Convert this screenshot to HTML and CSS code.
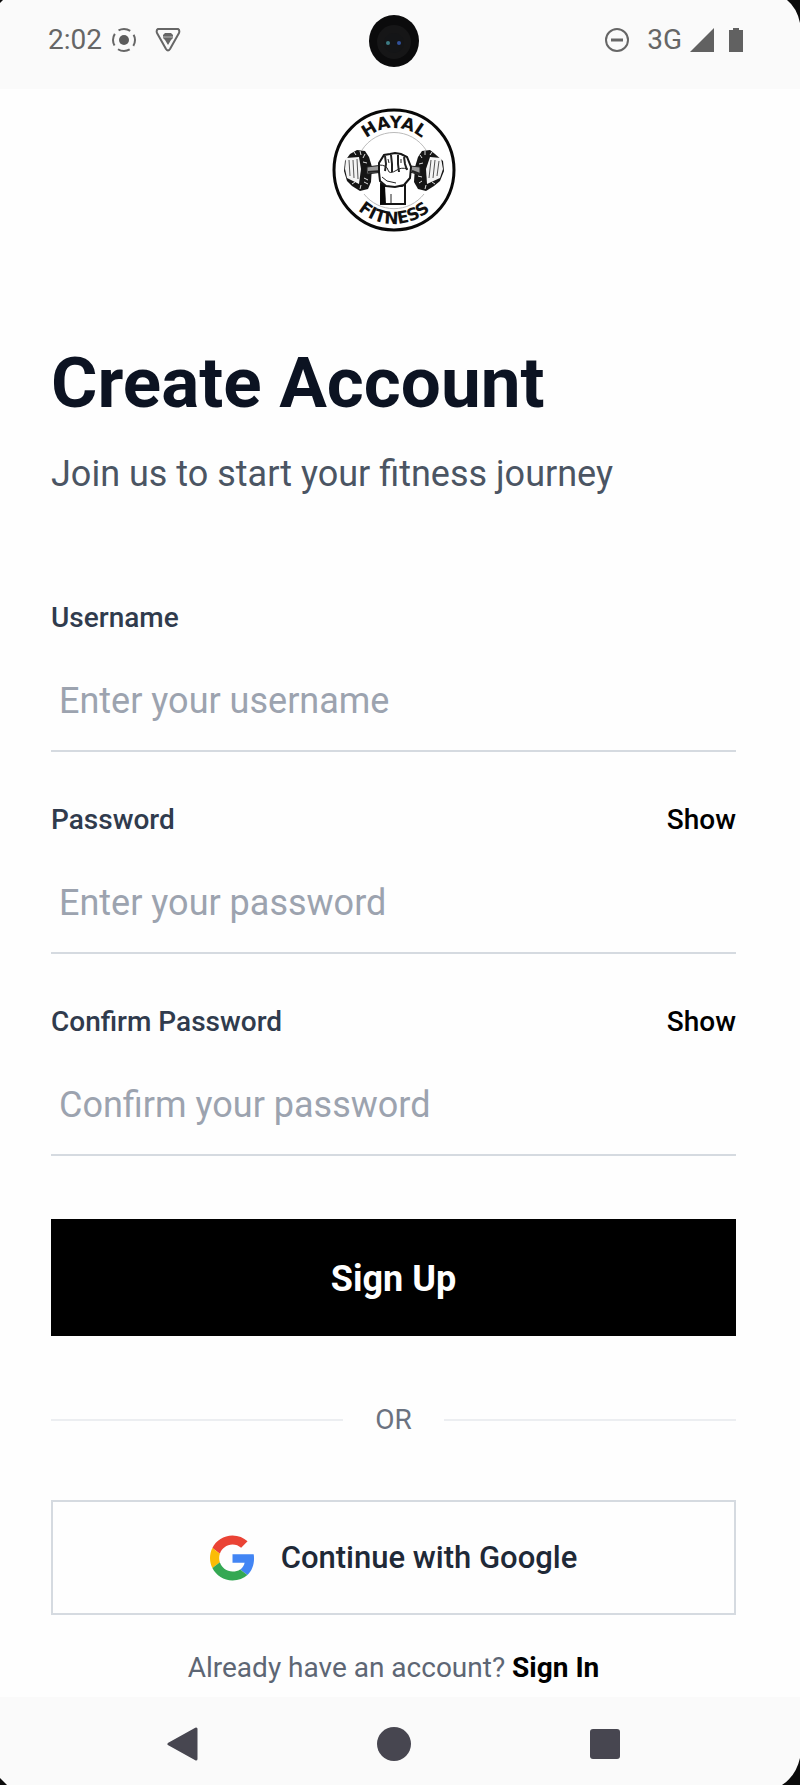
FILE: index.html
```
<!DOCTYPE html>
<html lang="en">
<head>
  <meta charset="UTF-8" />
  <meta name="viewport" content="width=device-width, initial-scale=1.0" />
  <title>Hayal Fitness - Create Account</title>
  <link rel="stylesheet" href="styles.css">
</head>
<body>

  <div class="screen">
    <header class="status-bar">
      <div class="status-left">
        <span>2:02</span>
        <svg class="cast" width="26" height="26" viewBox="0 0 26 26" fill="none" stroke="#666" stroke-width="2">
          <circle cx="13" cy="13" r="5" fill="#5c5c5c" stroke="none" />
          <circle cx="13" cy="13" r="11" stroke-dasharray="12.3 5" stroke-dashoffset="6.1" />
        </svg>
        <svg width="26" height="26" viewBox="0 0 26 26" fill="none" stroke="#666" stroke-width="2" stroke-linejoin="round">
          <path d="M3 2h20q2 1 1 4L15 22q-2 3-4 0L2 6q-1-3 1-4z" />
          <path d="M10 6h6l2 2v3l-2 2-3 5-3-5-2-2V8z" fill="#666" stroke="none" />
          <path d="M8 10h10" stroke="#bbb" stroke-width="1" />
        </svg>
      </div>
      <div class="status-right">
        <svg class="dnd" width="26" height="26" viewBox="0 0 26 26" fill="none" stroke="#666" stroke-width="2">
          <circle cx="13" cy="13" r="11" />
          <path d="M7 13h12" stroke-width="3" />
        </svg>
        <span>3G</span>
        <svg class="signal" width="24" height="24" viewBox="0 0 24 24" fill="#616161"><path d="M0 24L24 0v24z" /></svg>
        <svg width="16" height="26" viewBox="0 0 16 26" fill="#616161"><path d="M5 1h6v2h4v22H1V3h4z" /></svg>
      </div>
      <svg class="camera" width="52" height="54" viewBox="0 0 52 54">
        <ellipse cx="26" cy="27" rx="25" ry="26" fill="#0b0b0c" />
        <circle cx="26" cy="28" r="17" fill="#161617" />
        <circle cx="26" cy="29" r="10" fill="#141517" />
        <circle cx="20" cy="29" r="2" fill="#3d7c85" />
        <circle cx="31" cy="29" r="2" fill="#31519a" />
      </svg>
    </header>

    <main class="content">
      <svg class="logo" width="124" height="124" viewBox="0 0 124 124" role="img" aria-label="Hayal Fitness">
        <defs>
          <path id="topArc" d="M20 62a42 42 0 0 1 84 0" />
          <path id="bottomArc" d="M8 62a54 54 0 0 0 108 0" />
        </defs>
        <circle cx="62" cy="62" r="60" fill="#fff" stroke="#080808" stroke-width="3" />
        <path d="M30 42a38 38 0 0 1 64 0M32 86a38 38 0 0 0 60 0" fill="none" stroke="#bbb" />
        <text class="logo-text"><textPath href="#topArc" startOffset="50%">HAYAL</textPath></text>
        <text class="logo-text"><textPath href="#bottomArc" startOffset="50%">FITNESS</textPath></text>
        <!-- left weight -->
        <path d="M18 46l7-4 8 1 4 6 3 10-1 15-3 7-8 2-8-5-5-5-3-10 1-10z" fill="#151515" />
        <path d="M14 50l13-1 2 12-2 15-12-6-2-9z" fill="#f4f4f4" />
        <path d="M17 52l1 16M21 52l1 18M25 51l1 20" stroke="#555" fill="none" />
        <path d="M22 44l2 3M28 43l1 4M33 46l-2 4M20 76l3-2M28 81l1-4M36 76l-4-2M31 54l4 1M32 70l4 2" stroke="#ddd" fill="none" />
        <!-- right weight -->
        <path d="M103 46l-5-4-8 1-4 6-3 10-1 15 4 7 8 2 8-5 6-5 4-10-1-10z" fill="#151515" />
        <path d="M109 50l-11-1-4 12 1 15 13-6 3-9z" fill="#f4f4f4" />
        <path d="M99 52l-2 18M103 52l-2 18M107 53l-2 15" stroke="#555" fill="none" />
        <path d="M100 44l-2 3M93 43v4M88 47l2 3M87 75l3-2M93 81l1-4M103 76l-3-2M87 56l4-1M86 68l4 1" stroke="#ddd" fill="none" />
        <!-- bar -->
        <path d="M35 59l16-2v7l-16 2zM78 58l10 1v8l-10-3z" fill="#999" stroke="#222" />
        <path d="M36 64l14-1M80 63l8 3" stroke="#222" stroke-width="2" />
        <!-- fist and wrist -->
        <path d="M49 76l4 2h17l3-2v20H49z" fill="#fff" stroke="#151515" stroke-width="2" />
        <path d="M49 76l4 2 1 18h-6z" fill="#080808" />
        <path d="M47 64v-9l5-8 6-1 5-1 6 1 6 3 4 10-1 11-6 7-9 2-9-1-6-5z" fill="#fff" stroke="#151515" stroke-width="2" />
        <path d="M53 48l1 8-1 7M59 47l1 9v8M66 47v9l1 8M72 49l1 7 2 6" fill="none" stroke="#222" stroke-width="2" />
        <path d="M47 57q8 0 9 5t9 0q4-3 11-1M56 51l1 4M69 51v4M50 69l5 4 9 2M59 86v9" fill="none" stroke="#222" />
      </svg>

      <h1>Create Account</h1>
      <p class="subtitle">Join us to start your fitness journey</p>

      <form class="signup-form">
        <div class="field">
          <div class="field-header">
            <label for="username">Username</label>
          </div>
          <input type="text" id="username" placeholder="Enter your username" />
        </div>

        <div class="field">
          <div class="field-header">
            <label for="password">Password</label>
            <button type="button" class="show-btn">Show</button>
          </div>
          <input type="password" id="password" placeholder="Enter your password" />
        </div>

        <div class="field">
          <div class="field-header">
            <label for="confirmPassword">Confirm Password</label>
            <button type="button" class="show-btn">Show</button>
          </div>
          <input type="password" id="confirmPassword" placeholder="Confirm your password" />
        </div>

        <button type="submit" class="signup-btn">Sign Up</button>
      </form>

      <div class="divider"><span>OR</span></div>

      <button type="button" class="google-btn">
        <svg width="45" height="46" viewBox="0 0 48 48">
          <path fill="#EA4335" d="M24 9.500c3.540 0 6.710 1.220 9.210 3.600l6.850-6.850C35.900 2.380 30.470 0 24 0 14.620 0 6.510 5.380 2.560 13.220l7.980 6.190C12.430 13.720 17.740 9.500 24 9.500z" />
          <path fill="#4285F4" d="M46.980 24.550c0-1.570-.15-3.090-.38-4.550H24v9.020h12.940c-.58 2.960-2.260 5.480-4.780 7.180l7.730 6c4.510-4.180 7.090-10.360 7.090-17.650z" />
          <path fill="#FBBC05" d="M10.530 28.590c-.48-1.450-.76-2.990-.76-4.590s.27-3.140.76-4.590l-7.980-6.190C.92 16.460 0 20.120 0 24c0 3.880.92 7.540 2.560 10.780l7.970-6.190z" />
          <path fill="#34A853" d="M24 48c6.480 0 11.930-2.130 15.890-5.810l-7.730-6c-2.150 1.450-4.920 2.300-8.160 2.300-6.260 0-11.570-4.220-13.470-9.910l-7.980 6.190C6.510 42.620 14.620 48 24 48z" />
        </svg>
        <span>Continue with Google</span>
      </button>

      <p class="signin">Already have an account? <a href="#">Sign In</a></p>
    </main>

    <nav class="nav-bar">
      <button type="button" aria-label="Back">
        <svg width="34" height="34" viewBox="0 0 34 34"><path d="M3 17L30 2v30z" fill="#474650" stroke="#474650" stroke-width="3" stroke-linejoin="round" /></svg>
      </button>
      <button type="button" aria-label="Home">
        <svg width="34" height="34" viewBox="0 0 34 34"><circle cx="17" cy="17" r="17" fill="#474650" /></svg>
      </button>
      <button type="button" aria-label="Recent apps">
        <svg width="34" height="34" viewBox="0 0 34 34"><rect x="2" y="2" width="30" height="30" rx="3" fill="#474650" /></svg>
      </button>
    </nav>
  </div>

  <!-- device frame corners -->
  <svg class="corner top-left" width="3" height="3"><path d="M0 0h3L0 3z" /></svg>
  <svg class="corner top-right" width="13" height="23"><path d="M0 0h13v23Q10 8 0 0z" /></svg>
  <svg class="corner bottom-left" width="7" height="7"><path d="M0 0l7 7H0z" /></svg>
  <svg class="corner bottom-right" width="18" height="27"><path d="M18 0v27H0Q14 18 18 0z" /></svg>

</body>
</html>
```
FILE: styles.css
```
* {
  box-sizing: border-box;
}

body {
  margin: 0;
  position: relative;
  background: #fefefe;
  font-family: Roboto, sans-serif;
  color: #0c1322;
}

h1, p {
  margin: 0;
}

button, input {
  font-family: inherit;
  border-radius: 0;
}

button {
  padding: 0;
  border: none;
  background: none;
  cursor: pointer;
}

svg {
  display: block;
  flex-shrink: 0;
}

/* Status bar */
.status-bar {
  position: relative;
  display: flex;
  justify-content: space-between;
  height: 89px;
  padding: 24px 56px 33px 48px;
  margin-right: -13px;
  background: #fafafa;
  font-size: 28px;
  line-height: 32px;
  color: #666;
}

.status-left, .status-right {
  display: flex;
  align-items: center;
}

.status-left {
  gap: 18px;
}

.cast {
  margin-left: -9px;
}

.dnd {
  margin-right: 17px;
}

.signal {
  margin: 0 14px 0 8px;
}

.camera {
  position: absolute;
  top: 14px;
  left: calc(50% - 32px);
}

/* Page content */
.screen {
  min-height: 100vh;
  padding-right: 13px;
  display: flex;
  flex-direction: column;
}

.content {
  flex: 1;
  padding: 19px 51px 12px;
}

.logo {
  margin: 0 auto 109px;
}

.logo-text {
  font-family: "DejaVu Sans", sans-serif;
  font-size: 17px;
  font-weight: bold;
  text-anchor: middle;
  fill: #111;
}

h1 {
  font-size: 71px;
  font-weight: 700;
  line-height: 84px;
}

.subtitle {
  margin-top: 25px;
  font-size: 36px;
  line-height: 48px;
  color: #4b5563;
}

.signup-form {
  margin-top: 104px;
}

.field {
  margin-bottom: 52px;
}

.field-header {
  display: flex;
  justify-content: space-between;
  margin-bottom: 16px;
  font-size: 28px;
  font-weight: 500;
  line-height: 32px;
  color: #303b4d;
}

.show-btn {
  font-size: 28px;
  font-weight: 500;
  line-height: 32px;
  color: #000;
}

.field input {
  display: block;
  width: 100%;
  height: 102px;
  padding: 2px 8px 0;
  border: none;
  border-bottom: 2px solid #d5dae0;
  background: transparent;
  font-size: 36px;
  color: #111827;
  outline: none;
}

.field input::placeholder {
  color: #9ca3af;
}

.signup-btn {
  width: 100%;
  height: 117px;
  margin-top: 11px;
  padding-top: 2px;
  background: #000;
  color: #fff;
  font-size: 36px;
  font-weight: 700;
}

.divider {
  display: flex;
  align-items: center;
  gap: 32px;
  margin: 68px 0 64px;
  font-size: 28px;
  line-height: 32px;
  color: #6b7280;
}

.divider::before, .divider::after {
  content: "";
  flex: 1;
  height: 2px;
  background: #eceef1;
}

.google-btn {
  display: flex;
  align-items: center;
  justify-content: center;
  gap: 26px;
  width: 100%;
  height: 115px;
  border: 2px solid #d5dae0;
  font-size: 31px;
  font-weight: 500;
  color: #1f2937;
}

.signin {
  margin-top: 37px;
  font-size: 28px;
  line-height: 32px;
  text-align: center;
  color: #5d6674;
}

.signin a {
  color: #000;
  font-weight: 700;
  text-decoration: none;
}

/* Android navigation bar */
.nav-bar {
  display: flex;
  justify-content: center;
  align-items: center;
  gap: 177px;
  height: 88px;
  margin-right: -13px;
  padding: 5px 13px 0 0;
  background: #fafafa;
}

.corner {
  position: absolute;
  fill: #0b0b0b;
}

.top-left {
  top: 0;
  left: 0;
}

.top-right {
  top: 0;
  right: 0;
}

.bottom-left {
  bottom: 0;
  left: 0;
}

.bottom-right {
  bottom: 0;
  right: 0;
}
```
